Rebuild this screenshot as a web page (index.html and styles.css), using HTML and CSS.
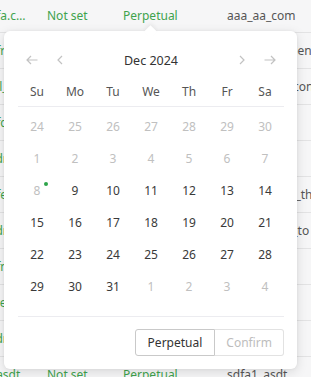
FILE: index.html
```html
<!DOCTYPE html>
<html>
<head>
<meta charset="utf-8">
<link rel="stylesheet" href="styles.css">
</head>
<body>
<div class="table">
  <div class="row first"><span class="c1">sdfa.com1234</span><span class="c2">Not set</span><span class="c3">Perpetual</span><span class="c4">aaa_aa_com</span></div>
  <div class="row"><span class="c1">sdfr_mail</span><span class="c2">Not set</span><span class="c3">Perpetual</span><span class="c4">sdfa_test_open</span></div>
  <div class="row"><span class="c1">sdll_all</span><span class="c2">Not set</span><span class="c3">Perpetual</span><span class="c4">aaa_asdf_tecon</span></div>
  <div class="row"><span class="c1">sdfc.com</span><span class="c2">Not set</span><span class="c3">Perpetual</span><span class="c4">aaa_aa</span></div>
  <div class="row"><span class="c1">asdn.com</span><span class="c2">Not set</span><span class="c3">Perpetual</span><span class="c4">aaa_bb</span></div>
  <div class="row"><span class="c1">sdfe.com</span><span class="c2">Not set</span><span class="c3">Perpetual</span><span class="c4">asdf_testing_th</span></div>
  <div class="row"><span class="c1">asdr.com</span><span class="c2">Not set</span><span class="c3">Perpetual</span><span class="c4">test_asdfgh_to</span></div>
  <div class="row"><span class="c1">sdfn.com</span><span class="c2">Not set</span><span class="c3">Perpetual</span><span class="c4">aa_cc</span></div>
  <div class="row"><span class="c1">qwen.com</span><span class="c2">Not set</span><span class="c3">Perpetual</span><span class="c4">test_dd</span></div>
  <div class="row"><span class="c1">asdn.com</span><span class="c2">Not set</span><span class="c3">Perpetual</span><span class="c4">aaa_ee</span></div>
  <div class="row"><span class="c1">sdasdt</span><span class="c2">Not set</span><span class="c3">Perpetual</span><span class="c4">sdfa1_asdt</span></div>
</div>

<div class="picker">
  <div class="header">
    <span class="nav"><svg width="12" height="10" viewBox="0 0 12 10"><path d="M11.5 5H1M5 1L1 5l4 4" fill="none" stroke="#c2c2c2" stroke-width="1.2"/></svg></span>
    <span class="nav"><svg width="6" height="10" viewBox="0 0 6 10"><path d="M5 1L1 5l4 4" fill="none" stroke="#c2c2c2" stroke-width="1.2"/></svg></span>
    <span class="title">Dec 2024</span>
    <span class="nav"><svg width="6" height="10" viewBox="0 0 6 10"><path d="M1 1l4 4-4 4" fill="none" stroke="#c2c2c2" stroke-width="1.2"/></svg></span>
    <span class="nav"><svg width="12" height="10" viewBox="0 0 12 10"><path d="M0.5 5H11M7 1l4 4-4 4" fill="none" stroke="#c2c2c2" stroke-width="1.2"/></svg></span>
  </div>
  <div class="weekdays">
    <span>Su</span><span>Mo</span><span>Tu</span><span>We</span><span>Th</span><span>Fr</span><span>Sa</span>
  </div>
  <div class="days">
    <span class="muted">24</span><span class="muted">25</span><span class="muted">26</span><span class="muted">27</span><span class="muted">28</span><span class="muted">29</span><span class="muted">30</span>
    <span class="muted">1</span><span class="muted">2</span><span class="muted">3</span><span class="muted">4</span><span class="muted">5</span><span class="muted">6</span><span class="muted">7</span>
    <span class="muted today">8<i class="dot"></i></span><span>9</span><span>10</span><span>11</span><span>12</span><span>13</span><span>14</span>
    <span>15</span><span>16</span><span>17</span><span>18</span><span>19</span><span>20</span><span>21</span>
    <span>22</span><span>23</span><span>24</span><span>25</span><span>26</span><span>27</span><span>28</span>
    <span>29</span><span>30</span><span>31</span><span class="muted">1</span><span class="muted">2</span><span class="muted">3</span><span class="muted">4</span>
  </div>
  <div class="footer">
    <button class="btn perpetual">Perpetual</button><button class="btn confirm">Confirm</button>
  </div>
</div>
</body>
</html>
```
FILE: styles.css
```css
* { box-sizing: border-box; }
html, body { margin: 0; padding: 0; }
body {
  width: 311px;
  height: 377px;
  overflow: hidden;
  position: relative;
  background: #f6f6f7;
  font-family: "Noto Sans", "Open Sans", sans-serif;
  font-size: 12px;
  color: #555;
}
.table { margin-left: -17px; }
.row {
  display: flex;
  align-items: center;
  height: 36px;
  border-bottom: 1px solid #e3e3e4;
  white-space: nowrap;
}
.row.first { height: 33px; padding-bottom: 2px; }
.c1 {
  flex: none;
  width: 64px;
  padding-right: 20px;
  overflow: hidden;
  text-overflow: ellipsis;
  color: #3fa34d;
}
.c2 { flex: none; width: 76px; color: #3fa34d; }
.c3 { flex: none; width: 104px; color: #3fa34d; }
.c4 { flex: none; color: #555; }

.picker {
  position: absolute;
  left: 4px;
  top: 31px;
  width: 293px;
  height: 338px;
  background: #fff;
  border-radius: 6px;
  box-shadow: 0 3px 12px rgba(0, 0, 0, 0.12), 0 0 3px rgba(0, 0, 0, 0.06);
  padding: 11px 13px 0 14px;
}
.picker::before {
  content: "";
  position: absolute;
  left: 142px;
  top: -4px;
  width: 9px;
  height: 9px;
  background: #fff;
  transform: rotate(45deg);
  box-shadow: -2px -2px 4px rgba(0, 0, 0, 0.05);
}
.header {
  position: relative;
  display: flex;
  align-items: center;
  height: 36px;
}
.nav {
  flex: none;
  width: 28px;
  height: 36px;
  display: flex;
  align-items: center;
  justify-content: center;
}
.title {
  flex: 1;
  text-align: center;
  font-size: 12.5px;
  color: #333;
}
.weekdays {
  display: grid;
  grid-template-columns: repeat(7, 38px);
  height: 29px;
  padding-bottom: 2px;
  border-bottom: 1px solid #ececf0;
  align-items: center;
  color: #555;
}
.weekdays span, .days span { text-align: center; }
.days {
  display: grid;
  grid-template-columns: repeat(7, 38px);
  grid-auto-rows: 32px;
  align-items: center;
  padding-top: 3px;
  padding-bottom: 14px;
  border-bottom: 1px solid #ececf0;
  color: #3a3a3a;
}
.days .muted { color: #c0c0c0; }
.today { position: relative; }
.dot {
  position: absolute;
  left: 26px;
  top: 0;
  width: 4px;
  height: 4px;
  border-radius: 50%;
  background: #2ea44a;
}
.footer {
  display: flex;
  justify-content: flex-end;
  padding-top: 12px;
}
.btn {
  height: 27px;
  padding: 0 11px;
  font-family: inherit;
  font-size: 12px;
  background: #fff;
  margin: 0;
}
.perpetual {
  padding: 0 12px;
  border: 1px solid #c9c9c9;
  border-radius: 3px 0 0 3px;
  color: #333;
}
.confirm {
  border: 1px solid #e2e2e2;
  border-left: none;
  border-radius: 0 3px 3px 0;
  color: #bdbdbd;
}
```
